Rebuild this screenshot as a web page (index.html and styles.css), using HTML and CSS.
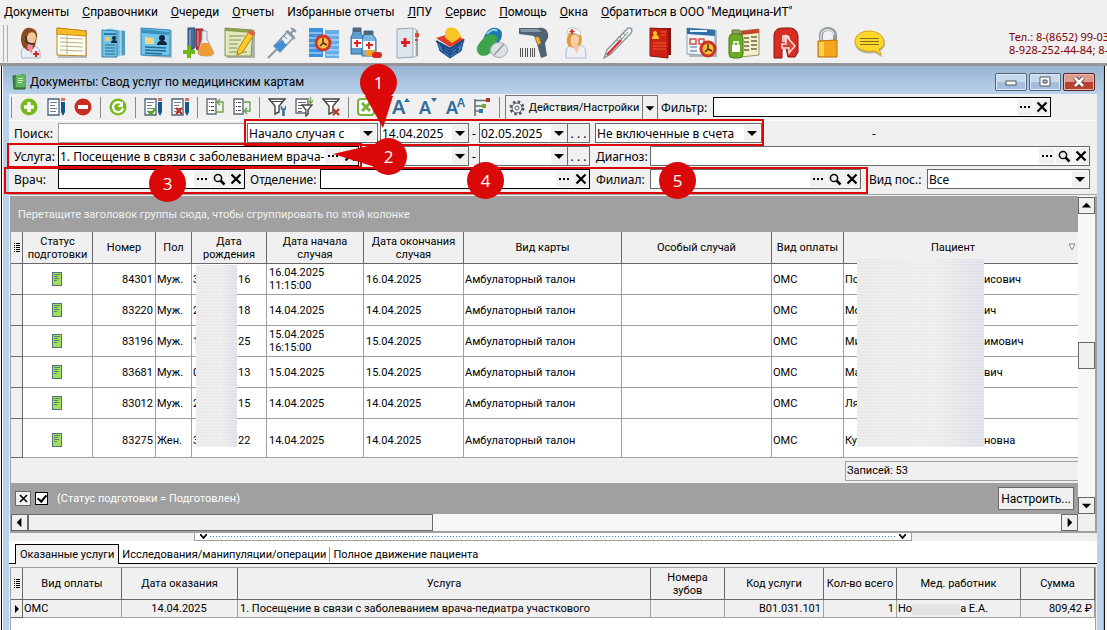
FILE: index.html
```html
<!DOCTYPE html>
<html lang="ru">
<head>
  <meta charset="UTF-8" />
  <title>Документы: Свод услуг по медицинским картам</title>
  <link rel="stylesheet" href="styles.css">
</head>
<body>
  <svg class="defs" aria-hidden="true">
    <symbol id="dots" viewBox="0 0 16 16"><path d="M3 7h2v2H3zM7 7h2v2H7zM11 7h2v2h-2z"/></symbol>
    <symbol id="cross" viewBox="0 0 16 16"><path d="M3.500 3.500l9 9M12.500 3.500l-9 9" fill="none" stroke="#000" stroke-width="2.200"/></symbol>
    <symbol id="lens" viewBox="0 0 16 16"><circle cx="7" cy="7" r="3.600" fill="none" stroke="#000" stroke-width="1.500"/><path d="M9.500 9.500l4 4" stroke="#000" stroke-width="2.500"/></symbol>
    <symbol id="down" viewBox="0 0 16 16"><path d="M3 6h10l-5 5z"/></symbol>
    <symbol id="doc" viewBox="0 0 10 14"><path d="M0 0h10v14H0z" fill="#536f7c"/><path d="M1 1h8v12H1z" fill="#9ee05a"/><path d="M2 2h6v1H2zM2 4h4v1H2zM2 6h5v1H2zM2 8h3v1H2z" fill="#5f7f6c"/></symbol>
    <symbol id="sheet" viewBox="0 0 18 20"><path d="M1 2h11v16H1z" fill="#fff" stroke="#4a6278" stroke-width="1.300"/><path d="M3 5.500h7M3 8.500h5M3 11.500h7M3 14.500h6" stroke="#70808c"/><path d="M14 5h4v10l-2 4-2-4z" fill="#12568c"/><path d="M14 1h4v3h-4z" fill="#dc7065"/></symbol>
    <symbol id="funnel" viewBox="0 0 18 20"><path d="M1 2h16l-6 7v6l-4 2V9z" fill="#fff" stroke="#444" stroke-width="1.400"/><path d="M4 4.500h10" stroke="#444"/></symbol>
    <symbol id="rows" viewBox="0 0 6 12"><path d="M0 1h1v1H0zM0 3h1v1H0zM0 5h1v1H0zM0 7h1v1H0zM0 9h1v1H0zM2 1h4v1H2zM2 3h4v1H2zM2 5h4v1H2zM2 7h4v1H2zM2 9h4v1H2z"/></symbol>
  </svg>

  <nav class="menu">
    <a href="#">Документы</a>
    <a href="#"><u>С</u>правочники</a>
    <a href="#"><u>О</u>череди</a>
    <a href="#"><u>О</u>тчеты</a>
    <a href="#">Избранные отчеты</a>
    <a href="#"><u>Л</u>ПУ</a>
    <a href="#"><u>С</u>ервис</a>
    <a href="#"><u>П</u>омощь</a>
    <a href="#"><u>О</u>кна</a>
    <a href="#"><u>О</u>братиться в ООО "Медицина-ИТ"</a>
  </nav>

  <div class="toolbar">
    <span class="grip"></span>
    <button aria-label="Регистратура"><svg viewBox="0 0 32 32"><path d="M8 31c-2-7 0-12 6-12h6c5 1 7 5 6 12z" fill="#e8eef6" stroke="#a9b6c8"/><path d="M9 20C5 13 7 3 13 1c6-1 11 3 10 9l-2 9-2 3-5 2z" fill="#8a4a1f"/><path d="M15 6c4-2 7 0 7 4s-2 7-5 7-4-4-4-7z" fill="#f4c69c"/><path d="M14 17h5l-1 10-5-6z" fill="#f18a96"/><path d="M12 9v5c2 3 5 3 8 3" fill="none" stroke="#333" stroke-width="1.500"/><path d="M21 24h2v2h2v2h-2v2h-2v-2h-2v-2h2z" fill="#e2231a"/></svg></button>
    <button aria-label="Журнал"><svg viewBox="0 0 32 32"><path d="M2 3h29v28H2z" fill="#b8bcc2"/><path d="M1 1l29 3v25L1 28z" fill="#fffef2" stroke="#b9871a"/><path d="M1 1l29 3v5L1 7z" fill="#f6bd23" stroke="#c88a12"/><path d="M4 11l23 1M4 15l23 1M4 19l23 1M4 23l23 1M11 8v19" stroke="#b8ad8c"/></svg></button>
    <button aria-label="Карты пациентов"><svg viewBox="0 0 32 32"><path d="M12 1l15 3v24l-15 3z" fill="#4c9cc4"/><path d="M8 1l15 2v26l-15 2z" fill="#77bfe0" stroke="#fff" stroke-width=".7"/><path d="M4 3l15 1v26L4 30z" fill="#6fc3e8" stroke="#3d83a8"/><path d="M6 6h12v2H6z" fill="#2c7ca8"/><path d="M7 10h5v4H7z" fill="#f8c95a"/><circle cx="16" cy="11" r="2" fill="#12243c"/><path d="M13 16c0-4 6-4 6 0z" fill="#12243c"/><path d="M7 18h10M7 21h10M7 24h10M7 27h10" stroke="#2c6788"/></svg></button>
    <button aria-label="Карта"><svg viewBox="0 0 32 32"><path d="M3 3h29v28L3 29z" fill="#b0b8c0"/><path d="M1 1l29 2v26L1 28z" fill="#6fc6ec" stroke="#3386b4"/><path d="M2 2l27 3v3L2 6z" fill="#3c8fbd"/><path d="M5 10l9 1v6H5z" fill="#f4d58a"/><circle cx="22" cy="11" r="3" fill="#13243a"/><path d="M17 18c0-6 10-6 10 0z" fill="#13243a"/><path d="M5 20l21 1M5 23l21 1M5 26l17 1" stroke="#276c91" stroke-width="1.500"/></svg></button>
    <button aria-label="Анализы"><svg viewBox="0 0 32 32"><path d="M6 1h7v18a3 3 0 0 1-7 0z" fill="#426d9c" stroke="#294b78"/><path d="M14 2h7v18a3 3 0 0 1-7 0z" fill="#c0323c" stroke="#822"/><path d="M20 4h5v8l7 14c0 4-16 4-16 0l4-14z" fill="#e8edf2" stroke="#9aa"/><path d="M20 16h7l5 10c0 4-16 4-16 0z" fill="#f29a35"/><path d="M8 3v17M16 4v15" stroke="#fff" opacity=".6"/><path d="M5 19h4v4h4v4H9v4H5v-4H1v-4h4z" fill="#71b916"/></svg></button>
    <button aria-label="Запись"><svg viewBox="0 0 32 32"><path d="M3 3h28v28H3z" fill="#b0b3aa"/><path d="M1 1l28 2-2 26H1z" fill="#e2e9b8" stroke="#87945c"/><path d="M1 1l28 2v3L1 4z" fill="#8ba14f"/><path d="M5 9h16M5 13h12M5 17h9M5 21h8M5 25h18" stroke="#839060"/><path d="M26 3l5 3-13 20-5 2 1-6z" fill="#f8cd28" stroke="#ba7b15"/><path d="M26 3l5 3-2 3-5-3z" fill="#e55b58"/></svg></button>
    <button aria-label="Прививки"><svg viewBox="0 0 32 32"><path d="M22 4l6 6-14 15-6-6z" fill="#e9eef5" stroke="#8794a5" stroke-width="1.500"/><path d="M15 13l6 5-7 7-6-6z" fill="#3f8fd1"/><path d="M24 7l5-5M25 1l5 4M20 4l9 8M11 22l-9 9" stroke="#8997a8" stroke-width="2"/><path d="M18 9l3 3M15 12l3 3" stroke="#6e8299"/></svg></button>
    <button aria-label="Расписание"><svg viewBox="0 0 32 32"><path d="M1 1h14v29H1z" fill="#3b91df"/><path d="M17 3h14v28H17z" fill="#67aee9"/><path d="M1 6h13M1 11h13M1 16h13M1 21h13M1 26h13M18 8h13M18 13h13M18 18h13M18 23h13M18 28h13" stroke="#d0e7fa"/><circle cx="15" cy="16" r="7" fill="#f9bd45" stroke="#cf3425" stroke-width="3"/><path d="M15 11v5l-3 3M15 16l4 2" stroke="#513118" stroke-width="1.500" fill="none"/></svg></button>
    <button aria-label="Аптека"><svg viewBox="0 0 32 32"><path d="M3 1h8v5l2 4v17H1V10l2-4z" fill="#5b9ecb" stroke="#2c6da1"/><path d="M3 1h8v4H3z" fill="#4f6579"/><path d="M14 4h9v4l3 4v17H12V12l2-4z" fill="#77b7df" stroke="#2c6da1"/><path d="M14 4h9v4h-9z" fill="#4f6579"/><path d="M2 12h10v9H2zM13 14h12v9H13z" fill="#fff"/><path d="M7 13v7M4 16h7M19 15v7M16 18h7" stroke="#e1261c" stroke-width="2"/><rect x="15" y="23" width="10" height="6" rx="3" fill="#f5a51f"/><rect x="22" y="25" width="10" height="6" rx="3" fill="#da291c"/></svg></button>
    <button aria-label="Медкарта"><svg viewBox="0 0 32 32"><path d="M8 3h18v26H8z" fill="#939ca5"/><path d="M6 2h18v28H6z" fill="#fff" stroke="#a6b0ba"/><path d="M5 2l16-1v29L5 31z" fill="#dce6ed" stroke="#98a9b8"/><path d="M23 6h4v4h-4zM23 12h3v2h-3z" fill="#dc4636"/><path d="M13 11v9M9 15.500h9" stroke="#e3191d" stroke-width="3"/></svg></button>
    <button aria-label="Препараты"><svg viewBox="0 0 32 32"><path d="M3 14l13 7 14-9-3 12-11 7-10-7z" fill="#377cc0" stroke="#1d4f8e"/><path d="M2 11l13-4 15 5-14 8z" fill="#d83c29"/><path d="M11 6c0-7 11-7 14-1l3 6-10 7-7-5z" fill="#f8c526"/><path d="M9 9l9 7 9-6v4l-10 5-8-5z" fill="#e03c25"/><path d="M2 14l14 8 14-9M6 18l10 7 11-8M8 22l8 6 9-6M9 18v8M16 22v9M23 18v8" fill="none" stroke="#1f467e" stroke-width="1.500"/></svg></button>
    <button aria-label="Таблетки"><svg viewBox="0 0 32 32"><path d="M7 12C11 3 14 0 20 1c6 1 7 6 5 11l-8 12z" fill="#2076b5"/><path d="M8 11c-6 6-9 10-6 15s12 3 14-3l6-12c-3-5-9-5-14 0z" fill="#3da449"/><path d="M11 7c4-5 8-5 10-3" stroke="#9bd4e4" fill="none" stroke-width="2"/><ellipse cx="23" cy="23" rx="8.500" ry="7.500" fill="#dce0e3" stroke="#a6adb2"/><path d="M18 28l10-11" stroke="#949ca4" stroke-width="1.500"/></svg></button>
    <button aria-label="Сканер"><svg viewBox="0 0 32 32"><path d="M1 1h20c7-1 10 4 9 10l-3 5 2 13-6 2-4-14-3-8-15-2z" fill="#536273"/><path d="M2 2h18l4 3H3z" fill="#8495a4"/><path d="M17 10h4l2 6-3 2z" fill="#efaa20"/><path d="M2.500 21v9M4.500 21v9M7.500 21v9M9.500 21v9M12.500 21v9M14.500 21v9M16.500 21v9" stroke="#555"/></svg></button>
    <button aria-label="Медсестра"><svg viewBox="0 0 32 32"><path d="M6 31c-1-9 2-13 7-13h7c5 1 6 5 6 13z" fill="#edf1f7" stroke="#adb9c9"/><path d="M8 19C5 11 8 5 14 4c7 0 9 6 7 13l-4 5z" fill="#e29b32"/><path d="M11 10c3-4 8-2 8 2s-2 8-5 8-4-5-3-10z" fill="#f8cfaa"/><path d="M7 7c-1-5 3-7 8-6 5 2 6 4 5 8-4-3-9-4-13-2z" fill="#fff" stroke="#b7bdca"/><path d="M12 2v5M9.500 4.500h5" stroke="#d82020" stroke-width="1.500"/><path d="M12 18l5 9 3-9z" fill="#f4c7ae"/></svg></button>
    <button aria-label="Температура"><svg viewBox="0 0 32 32"><path d="M26 1c3-1 5 2 3 5L9 27l-7 4 3-8z" fill="#f4f6f7" stroke="#8e9da7" stroke-width="1.500"/><path d="M5 28l14-15" stroke="#dc2d2b" stroke-width="2.500"/><path d="M19 13l7-8M15 13l2 2M18 10l2 2M21 6l2 2" stroke="#74856a"/></svg></button>
    <button aria-label="Паспорт"><svg viewBox="0 0 32 32"><path d="M8 1h19v27H8z" fill="#8f120e"/><path d="M6 1l18 1v29l-18-2z" fill="#cf2015" stroke="#8b1712"/><circle cx="11" cy="6" r="2" fill="#ffc820"/><path d="M8 12c0-6 7-6 7 0z" fill="#ffc820"/><path d="M17 5h5M17 8h5M9 16h13M9 19h13M9 22h13" stroke="#e0601c"/></svg></button>
    <button aria-label="План"><svg viewBox="0 0 32 32"><path d="M3 3h28v27H3z" fill="#b4b9bd"/><path d="M1 1l28 2v26L1 27z" fill="#edf4f8" stroke="#8aa3b7"/><path d="M1 1l28 2v6L1 7z" fill="#336fa4"/><path d="M4 4h17" stroke="#e3eff9" stroke-width="2"/><path d="M4 12h6v5H4zM13 12h5v5h-5z" fill="none" stroke="#d54d46" stroke-width="1.500"/><path d="M4 20h7M4 24h7" stroke="#9bb3c4" stroke-width="2"/><circle cx="22" cy="22" r="7" fill="#f9bb3e" stroke="#c83525" stroke-width="3"/><path d="M22 17v5l-3 3M22 22l4 2" fill="none" stroke="#513118" stroke-width="1.500"/></svg></button>
    <button aria-label="Архив"><svg viewBox="0 0 32 32"><path d="M13 4l18-2v26l-18 2z" fill="#f3efcb" stroke="#969469"/><path d="M13 4l18-2v4l-18 2z" fill="#c6442f"/><path d="M16 11h5M16 15h5M16 19h5M16 23h5M23 10h6M23 14h6M23 18h6M23 22h6" stroke="#8e8a63" stroke-width="2"/><path d="M4 8h8V3H4z" fill="#8fa35c" stroke="#5f7a30"/><rect x="1" y="7" width="14" height="24" rx="4" fill="#6cab24" stroke="#48741a"/><path d="M4 18h8v7H4z" fill="#fff"/><path d="M6 18v-3h4v3" fill="none" stroke="#fff" stroke-width="1.500"/></svg></button>
    <button aria-label="Выход"><svg viewBox="0 0 32 32"><path d="M4 31V9c0-6 4-8 9-8h7c5 0 8 4 8 9v15l-3 5h-7l-2-9h-4v10z" fill="#d72d22" stroke="#86150f"/><path d="M12 8h5c4 0 4 7 0 7h-5z" fill="#e9c6c2"/><path d="M16 9l9 10-6 7v-5h-7v-4h4z" fill="#d94237" stroke="#f7dedb" stroke-width="1.500"/></svg></button>
    <button aria-label="Блокировка"><svg viewBox="0 0 32 32"><path d="M9 16V8c0-8 14-8 14 0v8" fill="none" stroke="#8f9aa2" stroke-width="4"/><path d="M9 15V8c0-7 13-7 13 0" fill="none" stroke="#dde2e5" stroke-width="1.500"/><path d="M6 14l19-1v17H6z" fill="#f5a61c" stroke="#bb700e"/><path d="M7 15h5v14H7z" fill="#ffcf51"/></svg></button>
    <button aria-label="Сообщения"><svg viewBox="0 0 32 32"><path d="M16 6c9 0 15 4 15 10 0 4-2 6-5 8l2 6-7-4c-12 2-20-3-20-10C1 10 7 6 16 6z" fill="#b1b0a6"/><path d="M15 4c9 0 15 5 15 11 0 4-2 6-5 7l2 6-6-4C10 26 1 21 1 15 1 9 6 4 15 4z" fill="#ffd62a" stroke="#d4a310"/><path d="M6 11.500h19M6 14.500h19M6 17.500h19" stroke="#806b1c"/></svg></button>
    <p class="phones">Тел.: 8-(8652) 99-03<br>8-928-252-44-84; 8-</p>
  </div>

  <main class="mdi">
    <section class="window">
      <header class="titlebar">
        <svg width="14" height="16" viewBox="0 0 14 16"><path d="M1 2l9-1h3v14H2z" fill="#438d45" stroke="#28652d"/><path d="M4 1h9v12H4z" fill="#61b55c"/><path d="M6 4.500h5M6 6.500h5M6 8.500h4" stroke="#d9f1cf"/></svg>
        <h1>Документы: Свод услуг по медицинским картам</h1>
        <div class="winbtns">
          <button aria-label="Свернуть"><svg viewBox="0 0 30 16"><rect x="10" y="7" width="10" height="4" fill="#fff" stroke="#555"/></svg></button>
          <button aria-label="Развернуть"><svg viewBox="0 0 30 16"><path d="M10 3h10v9H10z" fill="#fff" stroke="#555"/><path d="M13 6h4v3h-4z" fill="#9fbddd" stroke="#555"/></svg></button>
          <button class="close" aria-label="Закрыть"><svg viewBox="0 0 30 16"><path d="M11 4l8 8M19 4l-8 8" stroke="#534047" stroke-width="4.500"/><path d="M11 4l8 8M19 4l-8 8" stroke="#fff" stroke-width="2.500"/></svg></button>
        </div>
      </header>

      <div class="body">
        <div class="tools">
          <span class="sep"></span>
          <button aria-label="Добавить"><svg viewBox="0 0 18 20"><circle cx="9" cy="10" r="8.500" fill="#77b919"/><path d="M9 5v10M4 10h10" stroke="#fff" stroke-width="3.500"/></svg></button>
          <button aria-label="Изменить"><svg viewBox="0 0 18 20"><use href="#sheet"/></svg></button>
          <button aria-label="Удалить"><svg viewBox="0 0 18 20"><circle cx="9" cy="10" r="8.500" fill="#c92d22"/><path d="M4 10h10" stroke="#fff" stroke-width="4"/></svg></button>
          <span class="sep"></span>
          <button aria-label="Обновить"><svg viewBox="0 0 18 20"><circle cx="9" cy="10" r="8.500" fill="#77b919"/><path d="M13 7a5 5 0 1 0 1 4" fill="none" stroke="#fff" stroke-width="2.200"/><path d="M14 4v6H8.500z" fill="#fff"/></svg></button>
          <span class="sep"></span>
          <button aria-label="Отметить"><svg viewBox="0 0 18 20"><use href="#sheet"/><path d="M4 14l3 3 5-6" fill="none" stroke="#5ca51a" stroke-width="2.200"/></svg></button>
          <button aria-label="Снять отметку"><svg viewBox="0 0 18 20"><use href="#sheet"/><path d="M5 11l6 6M11 11l-6 6" stroke="#bd2f23" stroke-width="2.200"/></svg></button>
          <span class="sep"></span>
          <button aria-label="Развернуть группы"><svg viewBox="0 0 18 20"><path d="M1 2h9v15H1z" fill="#fff" stroke="#5c6c78" stroke-width="1.400"/><path d="M3 5.500h1M5 5.500h3M3 9.500h1M5 9.500h3M3 13.500h1M5 13.500h3" stroke="#444"/><path d="M10 15h7V5h-5M14 2l-3 3 3 3" fill="none" stroke="#70a14b" stroke-width="1.400"/></svg></button>
          <button aria-label="Свернуть группы"><svg viewBox="0 0 18 20"><path d="M1 2h9v15H1z" fill="#fff" stroke="#5c6c78" stroke-width="1.400"/><path d="M3 5.500h1M5 5.500h3M3 9.500h1M5 9.500h3M3 13.500h1M5 13.500h3" stroke="#444"/><path d="M10 5h7v9h-5M14 11l-3 3 3 3" fill="none" stroke="#70a14b" stroke-width="1.400"/></svg></button>
          <span class="sep"></span>
          <button aria-label="Настроить фильтр"><svg viewBox="0 0 18 20"><use href="#funnel"/><path d="M15.500 12v7" stroke="#2f6f9e" stroke-width="2.500"/><path d="M13.500 9v3h4V9" fill="none" stroke="#2f6f9e" stroke-width="1.500"/></svg></button>
          <button aria-label="Сохраненный фильтр"><svg viewBox="0 0 18 20"><path d="M1 2h12v14H1z" fill="#fff" stroke="#5c6c78" stroke-width="1.400"/><path d="M3 5.500h8M3 8.500h4M3 11.500h4M3 14.500h4" stroke="#667"/><path d="M7 8h10l-4 5v4l-2 2v-6z" fill="#fff" stroke="#444" stroke-width="1.300"/><path d="M15.500 0v6M13 3.500l2.500 3 2.500-3" fill="none" stroke="#70a14b" stroke-width="1.300"/></svg></button>
          <button aria-label="Сбросить фильтр"><svg viewBox="0 0 18 20"><use href="#funnel"/><path d="M11 12l6 6M17 12l-6 6" stroke="#bd2f23" stroke-width="2.200"/></svg></button>
          <span class="sep"></span>
          <button aria-label="Excel"><svg viewBox="0 0 18 20"><rect x="1" y="2" width="16" height="16" rx="3" fill="#fff" stroke="#77b436" stroke-width="2"/><path d="M5 6l8 8M13 6l-8 8" stroke="#77b436" stroke-width="3"/></svg></button>
          <span class="sep"></span>
          <button class="letter big" aria-label="Крупнее">A<svg class="mark" viewBox="0 0 6 4"><path d="M0 4l3-4 3 4z" fill="#2e6d9c"/></svg></button>
          <button class="letter" aria-label="Мельче">A<svg class="mark" viewBox="0 0 6 4"><path d="M0 0l3 4 3-4z" fill="#2e6d9c"/></svg></button>
          <button class="letter" aria-label="Обычный размер">A<sup>A</sup></button>
          <button aria-label="Выравнивание"><svg viewBox="0 0 18 20"><path d="M2 2v17M2 3.500h12M2 9h8M2 14h5" fill="none" stroke="#667077" stroke-width="1.600"/><path d="M13 1h4v4h-4z" fill="#bd3027"/><path d="M9 7h4v4H9z" fill="#70a92c"/><path d="M6 12h4v4H6z" fill="#2f78aa"/></svg></button>
          <span class="sep"></span>
          <button class="actions"><svg width="16" height="16" viewBox="0 0 16 16"><circle cx="8" cy="8" r="6" fill="#fff" stroke="#4f5964" stroke-width="3" stroke-dasharray="2.400 2.310"/><circle cx="8" cy="8" r="5" fill="#f4f5f7" stroke="#4f5964"/><circle cx="8" cy="8" r="2" fill="#fff" stroke="#4f5964"/></svg><span><u>Д</u>ействия/Настройки</span></button>
          <button class="actions-more" aria-label="Еще действия"><svg viewBox="0 0 16 16"><use href="#down"/></svg></button>
          <label for="filter">Фильтр:</label>
          <div class="field dark grow filter">
            <input id="filter" type="text">
            <button aria-label="Выбрать"><svg><use href="#dots"/></svg></button>
            <button aria-label="Очистить"><svg><use href="#cross"/></svg></button>
          </div>
        </div>

        <form class="filters">
          <div class="line">
            <label class="first" for="search">Поиск:</label>
            <div class="field light w-search"><input id="search" type="text"></div>
            <div class="combo w-kind"><select aria-label="Вид даты"><option>Начало случая с</option></select></div>
            <div class="field w-date"><input type="text" value="14.04.2025" aria-label="Дата с"><button type="button" aria-label="Календарь"><svg><use href="#down"/></svg></button></div>
            <span class="dash">-</span>
            <div class="field w-date"><input type="text" value="02.05.2025" aria-label="Дата по"><button type="button" aria-label="Календарь"><svg><use href="#down"/></svg></button></div>
            <button type="button" class="more">. . .</button>
            <div class="combo w-bill"><select aria-label="Счета"><option>Не включенные в счета</option></select></div>
            <span class="total">-</span>
          </div>
          <div class="line">
            <label class="first" for="service">Услуга:</label>
            <div class="field dark w-service">
              <input id="service" type="text" value="1. Посещение в связи с заболеванием врача-педиатра">
              <button type="button" aria-label="Выбрать"><svg><use href="#dots"/></svg></button>
              <button type="button" aria-label="Очистить"><svg><use href="#cross"/></svg></button>
            </div>
            <div class="field w-date"><input type="text" aria-label="Дата с"><button type="button" aria-label="Календарь"><svg><use href="#down"/></svg></button></div>
            <span class="dash">-</span>
            <div class="field w-date"><input type="text" aria-label="Дата по"><button type="button" aria-label="Календарь"><svg><use href="#down"/></svg></button></div>
            <button type="button" class="more">. . .</button>
            <label class="next" for="diag">Диагноз:</label>
            <div class="field grow">
              <input id="diag" type="text">
              <button type="button" aria-label="Выбрать"><svg><use href="#dots"/></svg></button>
              <button type="button" aria-label="Найти"><svg><use href="#lens"/></svg></button>
              <button type="button" aria-label="Очистить"><svg><use href="#cross"/></svg></button>
            </div>
          </div>
          <div class="line">
            <label class="first" for="doctor">Врач:</label>
            <div class="field dark w-search">
              <input id="doctor" type="text">
              <button type="button" aria-label="Выбрать"><svg><use href="#dots"/></svg></button>
              <button type="button" aria-label="Найти"><svg><use href="#lens"/></svg></button>
              <button type="button" aria-label="Очистить"><svg><use href="#cross"/></svg></button>
            </div>
            <label class="dept" for="dept">Отделение:</label>
            <div class="field dark w-dept">
              <input id="dept" type="text">
              <button type="button" aria-label="Выбрать"><svg><use href="#dots"/></svg></button>
              <button type="button" aria-label="Очистить"><svg><use href="#cross"/></svg></button>
            </div>
            <label class="next" for="branch">Филиал:</label>
            <div class="field w-branch">
              <input id="branch" type="text">
              <button type="button" aria-label="Выбрать"><svg><use href="#dots"/></svg></button>
              <button type="button" aria-label="Найти"><svg><use href="#lens"/></svg></button>
              <button type="button" aria-label="Очистить"><svg><use href="#cross"/></svg></button>
            </div>
            <label class="visit" for="visit">Вид пос.:</label>
            <div class="combo grow"><select id="visit"><option>Все</option></select></div>
          </div>
        </form>

        <div class="grid">
          <div class="grid-main">
            <div class="group-panel">Перетащите заголовок группы сюда, чтобы сгруппировать по этой колонке</div>
            <table class="cases">
              <colgroup><col class="c-ind"><col class="c-status"><col class="c-num"><col class="c-sex"><col class="c-birth"><col class="c-start"><col class="c-end"><col class="c-card"><col class="c-special"><col class="c-pay"><col></colgroup>
              <thead>
                <tr><th><svg width="6" height="12"><use href="#rows"/></svg></th><th>Статус подготовки</th><th>Номер</th><th>Пол</th><th>Дата рождения</th><th>Дата начала случая</th><th>Дата окончания случая</th><th>Вид карты</th><th>Особый случай</th><th>Вид оплаты</th><th>Пациент<svg class="sort" viewBox="0 0 8 8"><path d="M1 1h6l-3 6z" fill="#fff" stroke="#888"/></svg></th></tr>
              </thead>
              <tbody>
                <tr><td></td><td class="mid"><svg width="10" height="14"><use href="#doc"/></svg></td><td class="num">84301</td><td>Муж.</td><td class="has-smudge"><span class="b-head">3</span><span>16</span><i class="smudge smudge-date"></i></td><td class="date">16.04.2025 11:15:00</td><td class="date">16.04.2025</td><td>Амбулаторный талон</td><td></td><td>ОМС</td><td class="has-smudge"><span class="n-head">По</span><span>исович</span><i class="smudge smudge-name"></i></td></tr>
                <tr><td></td><td class="mid"><svg width="10" height="14"><use href="#doc"/></svg></td><td class="num">83220</td><td>Муж.</td><td><span class="b-head">2</span><span>18</span></td><td class="date">14.04.2025</td><td class="date">14.04.2025</td><td>Амбулаторный талон</td><td></td><td>ОМС</td><td><span class="n-head">Мо</span><span>ич</span></td></tr>
                <tr><td></td><td class="mid"><svg width="10" height="14"><use href="#doc"/></svg></td><td class="num">83196</td><td>Муж.</td><td><span class="b-head">1</span><span>25</span></td><td class="date">15.04.2025 16:15:00</td><td class="date">15.04.2025</td><td>Амбулаторный талон</td><td></td><td>ОМС</td><td><span class="n-head">Ми</span><span>имович</span></td></tr>
                <tr><td></td><td class="mid"><svg width="10" height="14"><use href="#doc"/></svg></td><td class="num">83681</td><td>Муж.</td><td><span class="b-head">0</span><span>13</span></td><td class="date">15.04.2025</td><td class="date">15.04.2025</td><td>Амбулаторный талон</td><td></td><td>ОМС</td><td><span class="n-head">Ма</span><span>вич</span></td></tr>
                <tr><td></td><td class="mid"><svg width="10" height="14"><use href="#doc"/></svg></td><td class="num">83012</td><td>Муж.</td><td><span class="b-head">2</span><span>15</span></td><td class="date">14.04.2025</td><td class="date">14.04.2025</td><td>Амбулаторный талон</td><td></td><td>ОМС</td><td><span class="n-head">Ля</span></td></tr>
                <tr class="tall"><td></td><td class="mid"><svg width="10" height="14"><use href="#doc"/></svg></td><td class="num">83275</td><td>Жен.</td><td><span class="b-head">3</span><span>22</span></td><td class="date">14.04.2025</td><td class="date">14.04.2025</td><td>Амбулаторный талон</td><td></td><td>ОМС</td><td><span class="n-head">Ку</span><span>новна</span></td></tr>
              </tbody>
            </table>
            <div class="summary"><span>Записей: 53</span></div>
            <div class="filter-bar">
              <button class="clear" aria-label="Убрать фильтр"><svg width="9" height="9" viewBox="0 0 9 9"><path d="M1 1l7 7M8 1L1 8" stroke="#000" stroke-width="1.600"/></svg></button>
              <label><input type="checkbox" checked>(Статус подготовки = Подготовлен)</label>
              <button class="setup">Настроить...</button>
            </div>
          </div>
          <div class="vscroll">
            <button aria-label="Вверх"><svg viewBox="0 0 16 16"><path d="M3 10h10L8 5z"/></svg></button>
            <span class="vthumb"></span>
            <button aria-label="Вниз"><svg viewBox="0 0 16 16"><use href="#down"/></svg></button>
          </div>
          <div class="hscroll">
            <button aria-label="Влево"><svg viewBox="0 0 16 16"><path d="M10 3v10L5 8z"/></svg></button>
            <span class="hthumb"></span>
            <button aria-label="Вправо"><svg viewBox="0 0 16 16"><path d="M6 3v10l5-5z"/></svg></button>
          </div>
        </div>

        <div class="splitter">
          <div class="handle">
            <svg width="7" height="5" viewBox="0 0 7 5"><path d="M0 0l3.500 4L7 0" fill="none" stroke="#000" stroke-width="1.800"/></svg>
            <span></span>
            <svg width="7" height="5" viewBox="0 0 7 5"><path d="M0 0l3.500 4L7 0" fill="none" stroke="#000" stroke-width="1.800"/></svg>
          </div>
        </div>

        <div class="tabs">
          <button class="active">Оказанные услуги</button>
          <button>Исследования/манипуляции/операции</button>
          <button>Полное движение пациента</button>
        </div>

        <div class="details">
          <table class="services">
            <colgroup><col class="c-ind"><col class="s-pay"><col class="s-date"><col><col class="s-teeth"><col class="s-code"><col class="s-qty"><col class="s-doc"><col class="s-sum"></colgroup>
            <thead>
              <tr><th><svg width="6" height="12"><use href="#rows"/></svg></th><th>Вид оплаты</th><th>Дата оказания</th><th>Услуга</th><th>Номера зубов</th><th>Код услуги</th><th>Кол-во всего</th><th>Мед. работник</th><th>Сумма</th></tr>
            </thead>
            <tbody>
              <tr><td class="mid"><svg width="6" height="8" viewBox="0 0 6 8"><path d="M1 0v8l4-4z"/></svg></td><td>ОМС</td><td class="mid">14.04.2025</td><td>1. Посещение в связи с заболеванием врача-педиатра участкового</td><td></td><td class="num">B01.031.101</td><td class="num">1</td><td>Но<i class="smear"></i>а Е.А.</td><td class="num">809,42 ₽</td></tr>
            </tbody>
          </table>
        </div>
      </div>

      <!-- step marks over the filter form -->
      <i class="frame frame-period"></i>
      <i class="frame frame-service"></i>
      <i class="frame frame-staff"></i>
      <svg class="tail tail-1" viewBox="0 0 36 32"><path d="M4 0h28L22 32z"/></svg>
      <svg class="tail tail-2" viewBox="0 0 52 32"><path d="M52 2v28L0 14z"/></svg>
      <span class="pin pin-1">1</span>
      <span class="pin pin-2">2</span>
      <span class="pin pin-3">3</span>
      <span class="pin pin-4">4</span>
      <span class="pin pin-5">5</span>
    </section>
  </main>
</body>
</html>
```

FILE: styles.css
```css
* {
  box-sizing: border-box;
}

body {
  margin: 0;
  height: 100vh;
  overflow: hidden;
  display: flex;
  flex-direction: column;
  background: #f0f0f0;
  color: #000;
  font-family: Roboto, "Noto Sans", sans-serif;
  font-size: 11px;
}

button,
input,
select {
  margin: 0;
  padding: 0;
  border: 0;
  border-radius: 0;
  background: none;
  color: inherit;
  font: inherit;
}

svg {
  display: block;
}

.defs {
  position: absolute;
  width: 0;
  height: 0;
}

/* main menu */
.menu {
  flex: none;
  display: flex;
  gap: 13px;
  height: 24px;
  padding-left: 4px;
  font-size: 12px;
  line-height: 24px;
  white-space: nowrap;
}

.menu a {
  color: #000;
  text-decoration: none;
}

.toolbar {
  flex: none;
  display: flex;
  align-items: center;
  gap: 10px;
  height: 42px;
  padding: 0 0 1px 3px;
  border-bottom: 3px solid #969696;
  overflow: hidden;
}

.toolbar button,
.toolbar button svg {
  flex: none;
  width: 32px;
  height: 32px;
}

.grip {
  flex: none;
  width: 5px;
  height: 37px;
  margin-right: -4px;
  border: solid #b0b0b0;
  border-width: 0 1px;
}

.phones {
  flex: none;
  width: 98px;
  margin: 0 0 0 auto;
  color: #800000;
  font-family: "Noto Sans", sans-serif;
  line-height: 13px;
  white-space: nowrap;
}

/* document window */
.mdi {
  flex: 1;
  min-height: 0;
  padding: 0 2px 0 1px;
  background: #f6f6f6;
}

.window {
  position: relative;
  display: flex;
  flex-direction: column;
  height: 100%;
  padding: 0 7px;
  border: solid #111;
  border-width: 0 1px;
  background: #b9d1ea;
  box-shadow: inset 1px 0 #fff, inset -1px 0 #40d8f0;
}

.titlebar {
  flex: none;
  display: flex;
  align-items: center;
  gap: 4px;
  height: 28px;
  margin: 0 -6px;
  padding: 4px 8px 0 9px;
  background: linear-gradient(#98b4d2, #b9d1ea);
}

.titlebar h1 {
  flex: 1;
  margin: 0;
  font-size: 12px;
  font-weight: normal;
  line-height: 20px;
}

.winbtns {
  display: flex;
  gap: 2px;
}

.winbtns button {
  width: 32px;
  height: 18px;
  border: 1px solid #53657a;
  border-radius: 2px;
  background: linear-gradient(#c7d9ec 50%, #a3bfdd 50%);
  box-shadow: inset 0 0 0 1px #dce8f4;
}

.winbtns .close {
  border-color: #5b2420;
  background: linear-gradient(#dc9b8d 50%, #b9422e 50%);
  box-shadow: inset 0 0 0 1px #e8b9ae;
}

.body {
  flex: 1;
  min-height: 0;
  display: flex;
  flex-direction: column;
  background: #f0f0f0;
}

.tools {
  flex: none;
  display: flex;
  align-items: center;
  gap: 9px;
  height: 27px;
  padding: 0 46px 0 3px;
  border-bottom: 1px solid #fff;
  font-size: 12px;
}

.tools > button {
  flex: none;
  width: 18px;
  height: 20px;
}

.sep {
  flex: none;
  width: 1px;
  height: 21px;
  margin: 0 -1px;
  background: #8a8a8a;
}

.tools .letter {
  position: relative;
  color: #2e6d9c;
  font: 600 18px/20px "Noto Sans", sans-serif;
  text-align: left;
}

.tools .big {
  font-size: 20px;
}

.letter sup {
  position: absolute;
  top: 0;
  right: -1px;
  font-size: 12px;
  line-height: 11px;
}

.letter .mark {
  position: absolute;
  top: 1px;
  right: 0;
  width: 6px;
  height: 4px;
}

.tools .actions {
  display: flex;
  align-items: center;
  justify-content: center;
  gap: 4px;
  width: 138px;
  height: 25px;
  margin-left: -3px;
  border: 1px solid #777;
  border-bottom: 0;
  font-size: 11px;
  white-space: nowrap;
}

.actions svg {
  flex: none;
}

.tools .actions-more {
  width: 16px;
  height: 25px;
  margin-left: -10px;
  border: 1px solid #777;
  border-bottom: 0;
}

.tools label {
  width: 52px;
  margin-left: -6px;
  font-family: "Noto Sans", sans-serif;
}

.tools .filter {
  margin-left: -9px;
}

/* filter form */
.filters {
  flex: none;
  display: flex;
  flex-direction: column;
  gap: 3px;
  padding: 2px 7px 5px 5px;
  border-bottom: 1px solid #a0a0a0;
  font-family: "Noto Sans", sans-serif;
  font-size: 12px;
}

.line {
  display: flex;
  align-items: center;
  height: 20px;
  white-space: nowrap;
}

.first {
  width: 44px;
}

.field {
  flex: none;
  display: flex;
  align-items: center;
  gap: 1px;
  height: 20px;
  padding-left: 1px;
  border: 1px solid #696969;
  background: #fff;
}

.dark {
  border-color: #000;
}

.light {
  border-color: #a0a0a0;
}

.grow {
  flex: 1;
}

.field input {
  flex: 1;
  min-width: 0;
  height: 18px;
}

.field button,
.field svg {
  flex: none;
  width: 16px;
  height: 16px;
}

.field button {
  background: #f0f0f0;
}

.combo {
  flex: none;
  position: relative;
  height: 20px;
  border: 1px solid #696969;
  background: #fff;
}

.combo.grow {
  flex: 1;
}

.combo select {
  appearance: none;
  display: block;
  width: 100%;
  height: 18px;
  padding: 0 18px 0 1px;
}

.combo::before {
  content: "";
  position: absolute;
  top: 1px;
  right: 1px;
  width: 16px;
  height: 16px;
  background: #f0f0f0;
  pointer-events: none;
}

.combo::after {
  content: "";
  position: absolute;
  top: 7px;
  right: 4px;
  border: 5px solid transparent;
  border-top-color: #000;
  border-bottom: 0;
  pointer-events: none;
}

.w-search {
  width: 187px;
}

.w-kind {
  width: 131px;
  margin: 0 2px;
}

.w-date {
  width: 89px;
}

.w-service {
  width: 301px;
  margin-right: 21px;
}

.w-dept {
  width: 270px;
}

.w-branch {
  width: 211px;
}

.w-bill {
  width: 167px;
  margin-left: 5px;
}

.dash {
  width: 10px;
  text-align: center;
}

.more {
  width: 22px;
  height: 20px;
  border: 1px solid #696969;
  border-left: 0;
}

.next {
  width: 60px;
  padding-left: 6px;
}

.dept {
  width: 75px;
  padding-left: 5px;
}

.visit {
  width: 66px;
  padding-left: 8px;
}

.total {
  flex: 1;
  padding-left: 110px;
}

/* case list */
.grid {
  flex: none;
  display: grid;
  grid-template-columns: 1fr 17px;
  margin: 1px 0 0 1px;
  border: solid #a0a0a0;
  border-width: 0 2px 2px 1px;
}

.group-panel {
  height: 36px;
  padding-left: 7px;
  background: #a0a0a0;
  color: #f0f0f0;
  line-height: 38px;
}

table {
  width: 100%;
  table-layout: fixed;
  border-collapse: separate;
  border-spacing: 0;
  line-height: 13px;
}

th {
  height: 32px;
  padding: 0 2px;
  border-right: 1px solid #696969;
  border-bottom: 1px solid #696969;
  background: #f0f0f0;
  font-weight: normal;
}

th svg,
td svg {
  margin: 0 auto;
}

th:first-child,
td:first-child {
  padding: 0;
}

td {
  height: 31px;
  padding: 0 2px 0 1px;
  border-right: 1px solid #a0a0a0;
  border-bottom: 1px solid #a0a0a0;
  background: #fff;
  white-space: nowrap;
}

td:first-child {
  border-color: #696969;
  background: #f0f0f0;
}

.cases th:last-child,
.cases td:last-child {
  border-right: 0;
}

.cases th:last-child {
  position: relative;
  padding-right: 18px;
}

.sort {
  position: absolute;
  top: 11px;
  right: 2px;
  width: 8px;
  height: 8px;
}

.tall td {
  height: 39px;
  padding-top: 4px;
}

.mid {
  text-align: center;
}

.num {
  text-align: right;
}

.date {
  padding-left: 2px;
  white-space: normal;
}

.c-ind { width: 12px; }
.c-status { width: 70px; }
.c-num { width: 63px; }
.c-sex { width: 36px; }
.c-birth { width: 75px; }
.c-start { width: 97px; }
.c-end { width: 100px; }
.c-card { width: 158px; }
.c-special { width: 150px; }
.c-pay { width: 72px; }

.b-head,
.n-head {
  display: inline-block;
  vertical-align: top;
}

.b-head {
  width: 4px;
  margin-right: 41px;
}

.n-head {
  width: 12px;
  margin-right: 127px;
}

.has-smudge {
  position: relative;
  z-index: 1;
}

.smudge {
  position: absolute;
  background:
    repeating-linear-gradient(0deg, rgba(255, 255, 255, 0.25) 0 1px, transparent 1px 3px),
    linear-gradient(90deg, #ebe9e8, #ededed 60%, #dedfe8);
}

.smudge-date {
  top: 1px;
  left: 4px;
  width: 41px;
  height: 182px;
}

.smudge-name {
  top: -5px;
  left: 13px;
  width: 127px;
  height: 188px;
}

.summary {
  height: 25px;
  padding: 3px 0 2px 834px;
}

.summary span {
  display: block;
  height: 20px;
  padding-left: 1px;
  border: 1px solid #a0a0a0;
  border-right: 0;
  line-height: 18px;
}

.filter-bar {
  display: flex;
  align-items: center;
  gap: 4px;
  height: 31px;
  padding: 0 4px;
  background: #a0a0a0;
  color: #fff;
}

.filter-bar label {
  flex: 1;
  display: flex;
  align-items: center;
  gap: 9px;
}

.filter-bar input {
  appearance: none;
  width: 13px;
  height: 13px;
  border: 1px solid #000;
  background: #fff;
}

.filter-bar input:checked::after {
  content: "";
  display: block;
  width: 4px;
  height: 7px;
  margin: 0 0 0 3px;
  border: solid #000;
  border-width: 0 2px 2px 0;
  transform: rotate(40deg);
}

.clear {
  display: grid;
  place-items: center;
  width: 16px;
  height: 15px;
  border: 1px solid #696969;
  background: #f0f0f0;
}

.filter-bar .setup {
  width: 76px;
  height: 23px;
  border: 1px solid #696969;
  background: #f0f0f0;
  color: #000;
  font-size: 12px;
}

.vscroll,
.hscroll {
  display: flex;
  background: repeating-conic-gradient(#fff 0 25%, #f0f0f0 0 50%) 0 0 / 2px 2px;
}

.vscroll {
  flex-direction: column;
  padding-top: 1px;
}

.vscroll button,
.hscroll button {
  flex: none;
  width: 17px;
  height: 17px;
  border: 1px solid #696969;
  background: #f0f0f0;
}

.vthumb {
  height: 27px;
  margin: auto 0;
  border: 1px solid #696969;
  background: #f0f0f0;
}

.hthumb {
  width: 38%;
  margin-right: auto;
  border: 1px solid #696969;
  background: #f0f0f0;
}

/* splitter and details */
.splitter {
  flex: none;
  height: 8px;
  background: #f0f0f0;
}

.handle {
  display: flex;
  align-items: center;
  gap: 3px;
  width: 66%;
  height: 8px;
  margin: 0 auto;
  padding: 0 5px;
  border: 1px solid #a0a0a0;
  border-top: 0;
  background: #fff;
}

.handle span {
  flex: 1;
  height: 1px;
  background: repeating-linear-gradient(90deg, #2a83d8 0 1px, #fff 1px 3px);
}

.tabs {
  flex: none;
  display: flex;
  align-items: flex-end;
  height: 23px;
  padding-left: 6px;
  border-bottom: 1px solid #000;
  background: #fff;
}

.tabs button {
  height: 15px;
  margin-bottom: 1px;
  padding: 0 3px;
  line-height: 15px;
}

.tabs button + button + button {
  border-left: 1px solid #a0a0a0;
}

.tabs .active {
  height: 20px;
  margin-bottom: -1px;
  padding: 0 4px;
  border: 1px solid #000;
  border-bottom: 0;
  background: #f0f0f0;
}

.details {
  flex: 1;
  min-height: 0;
  margin: 3px 1px 0 1px;
  border: 1px solid #a0a0a0;
  border-bottom: 0;
  background: #fff;
}

.services td {
  height: 18px;
  background: #f0f0f0;
}

.services td:nth-child(4) {
  padding-left: 2px;
}

.s-pay { width: 99px; }
.s-date { width: 116px; }
.s-teeth { width: 74px; }
.s-code { width: 99px; }
.s-qty { width: 73px; }
.s-doc { width: 124px; }
.s-sum { width: 74px; }

.smear {
  display: inline-block;
  width: 48px;
  height: 11px;
  vertical-align: middle;
  background: #e2e3e4;
}

/* step marks */
.frame {
  position: absolute;
  z-index: 2;
  border: 2px solid #da0808;
  pointer-events: none;
}

.frame-period {
  top: 53px;
  left: 242px;
  width: 520px;
  height: 27px;
}

.frame-service {
  top: 77px;
  left: 5px;
  width: 355px;
  height: 25px;
}

.frame-staff {
  top: 101px;
  left: 2px;
  width: 864px;
  height: 27px;
}

.pin {
  position: absolute;
  z-index: 2;
  width: 37px;
  height: 37px;
  border-radius: 50%;
  background: #da0808;
  color: #fff;
  font: 17px/37px "Open Sans", sans-serif;
  text-align: center;
}

.tail {
  position: absolute;
  z-index: 2;
  fill: #da0808;
}

.pin-1 { top: -2px; left: 358px; }
.pin-2 { top: 72px; left: 368px; }
.pin-3 { top: 99px; left: 147px; }
.pin-4 { top: 96px; left: 465px; }
.pin-5 { top: 96px; left: 657px; }

.tail-1 {
  top: 30px;
  left: 359px;
  width: 36px;
  height: 32px;
}

.tail-2 {
  top: 74px;
  left: 331px;
  width: 52px;
  height: 32px;
}
```
